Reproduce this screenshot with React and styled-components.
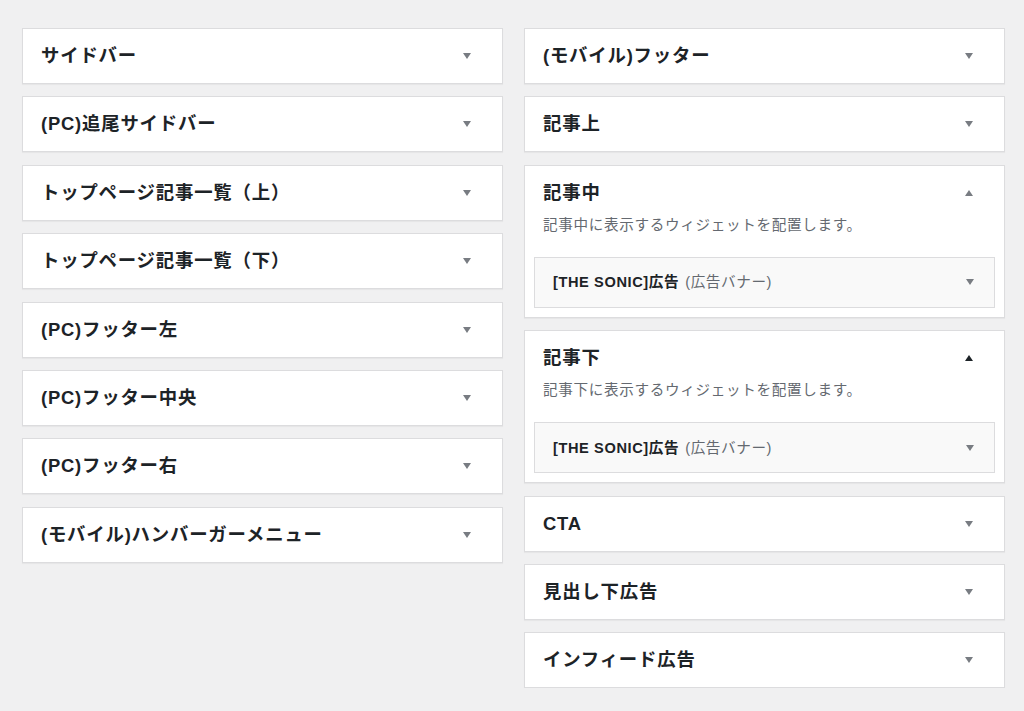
import React from "react";
import styled, { createGlobalStyle } from "styled-components";

const Global = createGlobalStyle`
  html, body { margin: 0; padding: 0; background: #f0f0f1; }
  body {
    font-family: "Liberation Sans", "Noto Sans CJK JP", sans-serif;
    color: #1d2327;
  }
`;

const Page = styled.div`
  display: grid;
  grid-template-columns: 481px 481px;
  column-gap: 21px;
  padding: 28px 0 0 22px;
  align-items: start;
`;

const Column = styled.div`
  display: flex;
  flex-direction: column;
  gap: 12.4px;
`;

const Area = styled.section`
  background: #fff;
  border: 1px solid #dcdcde;
  box-shadow: 0 1px 1px rgba(0, 0, 0, 0.04);
  padding-bottom: ${(p) => (p.$open ? "9px" : "0")};
`;

const Header = styled.div`
  display: flex;
  align-items: center;
  justify-content: space-between;
  height: ${(p) => (p.$open ? "26px" : "54px")};
  padding: ${(p) => (p.$open ? "14px 31px 0 18px" : "0 31px 0 18px")};
`;

const Title = styled.h2`
  margin: 0;
  font-size: 18.4px;
  font-weight: 700;
  line-height: 26px;
  letter-spacing: 0.8px;
  color: #1d2327;
  white-space: nowrap;
`;

const Arrow = styled.span`
  width: 0;
  height: 0;
  border-left: 4.5px solid transparent;
  border-right: 4.5px solid transparent;
  ${(p) =>
    p.$up
      ? `border-bottom: 6px solid ${p.$dark ? "#1d2327" : "#787c82"};`
      : `border-top: 6px solid ${p.$dark ? "#1d2327" : "#787c82"};`}
`;

const Description = styled.p`
  margin: 9px 0 0 18px;
  font-size: 14.6px;
  line-height: 20px;
  letter-spacing: 0.65px;
  color: #646970;
`;

const Widget = styled.div`
  margin: 22px 9px 0 9px;
  height: 49px;
  border: 1px solid #dcdcde;
  background: #f9f9f9;
  display: flex;
  align-items: center;
  justify-content: space-between;
  padding: 0 20px 0 18px;
`;

const WidgetTitle = styled.span`
  font-size: 14.6px;
  font-weight: 700;
  letter-spacing: 0.6px;
  line-height: 20px;
  color: #1d2327;
  white-space: nowrap;
`;

const WidgetSub = styled.span`
  font-weight: 400;
  color: #646970;
  margin-left: 6px;
`;

function Collapsed({ title }) {
  return (
    <Area>
      <Header>
        <Title>{title}</Title>
        <Arrow />
      </Header>
    </Area>
  );
}

function Expanded({ title, desc, dark }) {
  return (
    <Area $open>
      <Header $open>
        <Title>{title}</Title>
        <Arrow $up $dark={dark} />
      </Header>
      <Description>{desc}</Description>
      <Widget>
        <WidgetTitle>
          [THE SONIC]広告<WidgetSub>(広告バナー)</WidgetSub>
        </WidgetTitle>
        <Arrow />
      </Widget>
    </Area>
  );
}

const left = [
  "サイドバー",
  "(PC)追尾サイドバー",
  "トップページ記事一覧（上）",
  "トップページ記事一覧（下）",
  "(PC)フッター左",
  "(PC)フッター中央",
  "(PC)フッター右",
  "(モバイル)ハンバーガーメニュー",
];

export default function App() {
  return (
    <>
      <Global />
      <Page>
        <Column>
          {left.map((t) => (
            <Collapsed key={t} title={t} />
          ))}
        </Column>
        <Column>
          <Collapsed title="(モバイル)フッター" />
          <Collapsed title="記事上" />
          <Expanded title="記事中" desc="記事中に表示するウィジェットを配置します。" />
          <Expanded title="記事下" desc="記事下に表示するウィジェットを配置します。" dark />
          <Collapsed title="CTA" />
          <Collapsed title="見出し下広告" />
          <Collapsed title="インフィード広告" />
        </Column>
      </Page>
    </>
  );
}
